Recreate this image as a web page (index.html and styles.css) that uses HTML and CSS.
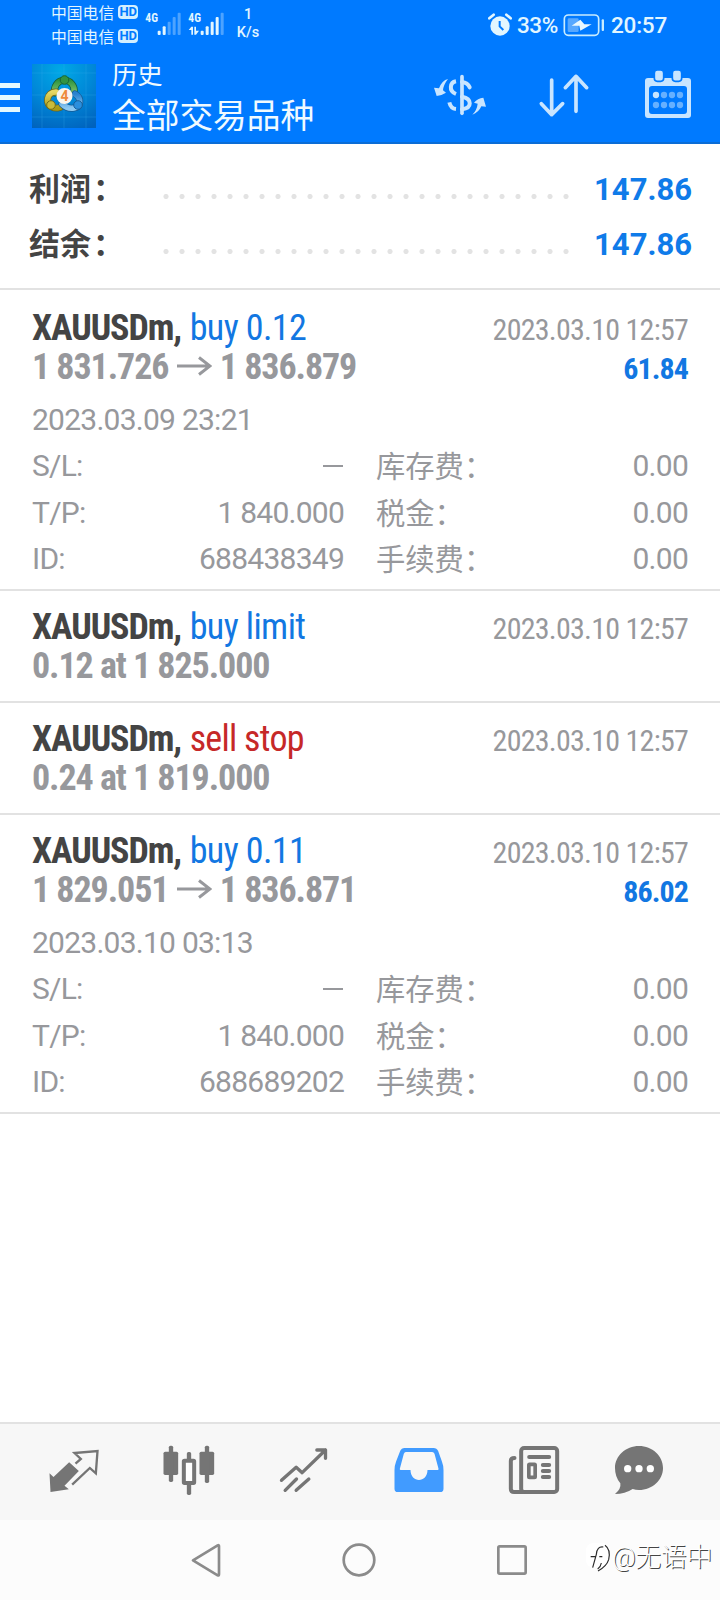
FILE: index.html
```html
<!DOCTYPE html>
<html lang="zh-CN">
<head>
<meta charset="utf-8">
<title>历史</title>
<link rel="stylesheet" href="styles.css">
</head>
<body>
<div class="screen">
  <header class="header">
    <div class="status">
      <div class="carriers">
        <div class="carrier">中国电信<span class="hd">HD</span></div>
        <div class="carrier">中国电信<span class="hd">HD</span></div>
      </div>
      <svg class="signal" width="80" height="28" viewBox="436 30 240 84">
        <g fill="#e2f6ff">
          <text class="net" x="437" y="67" textLength="38" lengthAdjust="spacingAndGlyphs">4G</text>
          <text class="net" x="566" y="67" textLength="38" lengthAdjust="spacingAndGlyphs">4G</text>
          <rect x="474" y="92" width="9" height="13" rx="3"/><rect x="489" y="79" width="9" height="26" rx="3"/>
          <rect x="603" y="92" width="9" height="13" rx="3"/><rect x="618" y="79" width="9" height="26" rx="3"/>
          <rect x="633" y="65" width="9" height="40" rx="3"/><rect x="648" y="51" width="9" height="54" rx="3"/>
          <path d="M567 90L575 80H580V104H575V90ZM584 80H589V92H598L589 104H584Z"/>
        </g>
        <g fill="#4da3ff">
          <rect x="504" y="65" width="9" height="40" rx="3"/><rect x="519" y="51" width="9" height="54" rx="3"/>
          <rect x="534" y="38" width="9" height="67" rx="3"/><rect x="663" y="38" width="9" height="67" rx="3"/>
        </g>
      </svg>
      <div class="speed"><span>1</span><span>K/s</span></div>
      <div class="status-right">
        <svg width="24" height="24" viewBox="383 37 72 72">
          <circle cx="419" cy="76" r="29" fill="#e2f6ff"/>
          <path d="M387 53L400 42M451 53L438 42" stroke="#e2f6ff" stroke-width="8" stroke-linecap="round"/>
          <path d="M418 61V77L429 88" fill="none" stroke="#007aff" stroke-width="6"/>
        </svg>
        <span class="pct">33%</span>
        <svg class="battery" width="42" height="24" viewBox="612 37 126 72">
          <rect x="616" y="43" width="103" height="61" rx="12" fill="none" stroke="#c8ecff" stroke-width="5"/>
          <rect x="626" y="53" width="33" height="41" rx="4" fill="#57a8ff"/>
          <path d="M664 57L638 75H661L664 90L698 71H676Z" fill="#e9f8ff"/>
          <rect x="728" y="56" width="7" height="35" rx="3" fill="#c8ecff"/>
        </svg>
        <span class="clock">20:57</span>
      </div>
    </div>
    <div class="toolbar">
      <div class="menu"><i></i><i></i><i></i></div>
      <svg class="logo" width="64" height="64" viewBox="0 0 64 64">
        <defs>
          <radialGradient id="bg" cx=".45" cy=".1" r="1"><stop offset="0" stop-color="#00a9e6"/><stop offset=".5" stop-color="#0088d8"/><stop offset="1" stop-color="#0062bd"/></radialGradient>
          <linearGradient id="gr" x2="0" y2="1"><stop offset="0" stop-color="#2f9440"/><stop offset="1" stop-color="#7fc36a"/></linearGradient>
          <linearGradient id="ye" x2="0" y2="1"><stop offset="0" stop-color="#e6d863"/><stop offset="1" stop-color="#a99a16"/></linearGradient>
          <linearGradient id="bl" x2="0" y2="1"><stop offset="0" stop-color="#2a82cf"/><stop offset="1" stop-color="#8cc9f2"/></linearGradient>
        </defs>
        <rect width="64" height="64" fill="url(#bg)"/>
        <path d="M10 0V64M32 0V64M54 0V64M0 9H64M0 31H64M0 53H64" stroke="#39b4ee" stroke-opacity=".25"/>
        <g fill="none" stroke-linecap="round">
          <path d="M23 29A9.800 9.800 0 1 1 42 28" stroke="#145c37" stroke-width="7"/>
          <path d="M23 29A9.800 9.800 0 1 1 42 28" stroke="url(#gr)" stroke-width="5.500"/>
          <path d="M24 28C14 28 13 41 20 43C24 45 28 44 30 42" stroke="#6c651c" stroke-width="7"/>
          <path d="M24 28C14 28 13 41 20 43C24 45 28 44 30 42" stroke="url(#ye)" stroke-width="5.500"/>
          <path d="M43 30C50 34 49 43 42 44C36 45 32 42 30 40" stroke="#155993" stroke-width="7"/>
          <path d="M43 30C50 34 49 43 42 44C36 45 32 42 30 40" stroke="url(#bl)" stroke-width="5.500"/>
        </g>
        <circle cx="32.500" cy="16" r="4.300" fill="#319343" stroke="#176636"/>
        <circle cx="19" cy="41" r="4.300" fill="#c9bb3b" stroke="#756d17"/>
        <circle cx="46" cy="41" r="4.300" fill="#2b8fdd" stroke="#16619c"/>
        <circle cx="32.500" cy="32" r="8" fill="#f8f5ee"/>
        <text class="four" x="32.500" y="37" text-anchor="middle">4</text>
      </svg>
      <div class="titles"><div class="sub">历史</div><div class="main">全部交易品种</div></div>
      <div class="actions">
        <svg width="56" height="56" viewBox="216 204 168 168">
          <g fill="none" stroke="#c9e5ff">
            <path d="M306 230V340" stroke-width="11" stroke-linecap="round"/>
            <path d="M288 244C270 247 265 273 288 282M268 307C271 320 277 326 288 327" stroke-width="12"/>
            <path d="M306 246C318 247 325 252 329 262M306 290C337 296 337 324 306 328" stroke-width="12" stroke-linecap="round"/>
          </g>
          <path d="M264 237Q246 241 237 265L222 263L230 288Q246 286 258 278L249 271Q250 255 264 237ZM337 344Q351 330 353 311L342 308Q353 295 370 293L378 320L364 319Q356 338 337 344Z" fill="#c9e5ff"/>
        </svg>
        <svg width="56" height="56" viewBox="528 204 168 168">
          <path d="M575 240V344M544 311L575 344L608 311M648 334V229M616 263L648 229L680 263" fill="none" stroke="#c9e5ff" stroke-width="11" stroke-linecap="round" stroke-linejoin="round"/>
        </svg>
        <svg width="56" height="56" viewBox="840 204 168 168">
          <path fill-rule="evenodd" fill="#c9e5ff" d="M864 234H984Q993 234 993 243V345Q993 354 984 354H864Q855 354 855 345V243Q855 234 864 234ZM876 258Q867 258 867 267V333Q867 342 876 342H972Q981 342 981 333V267Q981 258 972 258Z"/>
          <g fill="#c9e5ff" stroke="#007aff" stroke-width="5"><rect x="883" y="210" width="28" height="34" rx="9"/><rect x="937" y="210" width="28" height="34" rx="9"/></g>
          <circle cx="888" cy="285" r="9.500" fill="#c9e5ff"/>
          <g fill="#66b0ff"><circle cx="912" cy="285" r="9.500"/><circle cx="936" cy="285" r="9.500"/><circle cx="960" cy="285" r="9.500"/><circle cx="888" cy="315" r="9.500"/><circle cx="912" cy="315" r="9.500"/><circle cx="936" cy="315" r="9.500"/><circle cx="960" cy="315" r="9.500"/></g>
        </svg>
      </div>
    </div>
  </header>

  <section class="summary">
    <div class="sum-row"><span class="sum-label">利润<span class="colon">：</span></span><span class="dots"></span><span class="sum-value">147.86</span></div>
    <div class="sum-row"><span class="sum-label">结余<span class="colon">：</span></span><span class="dots"></span><span class="sum-value">147.86</span></div>
  </section>

  <main class="deals">
    <article class="deal">
      <div class="line"><div class="name"><b class="symbol">XAUUSDm,</b> <span class="buy">buy 0.12</span></div><time>2023.03.10 12:57</time></div>
      <div class="line"><div class="price">1 831.726 <svg class="arrow" width="35" height="20" viewBox="0 0 35 20"><path d="M0 10H33M22 1.500L33 10L22 18.500" fill="none" stroke="#97989c" stroke-width="3"/></svg> 1 836.879</div><b class="profit">61.84</b></div>
      <div class="details">
        <div class="opened">2023.03.09 23:21</div>
        <div class="row"><span class="key">S/L:</span><span class="val"><i class="dash"></i></span><span class="cjk">库存费：</span><span class="val">0.00</span></div>
        <div class="row"><span class="key">T/P:</span><span class="val">1 840.000</span><span class="cjk">税金：</span><span class="val">0.00</span></div>
        <div class="row"><span class="key">ID:</span><span class="val">688438349</span><span class="cjk">手续费：</span><span class="val">0.00</span></div>
      </div>
    </article>
    <article class="deal short">
      <div class="line"><div class="name"><b class="symbol">XAUUSDm,</b> <span class="buy">buy limit</span></div><time>2023.03.10 12:57</time></div>
      <div class="line"><div class="price">0.12 at 1 825.000</div></div>
    </article>
    <article class="deal short">
      <div class="line"><div class="name"><b class="symbol">XAUUSDm,</b> <span class="sell">sell stop</span></div><time>2023.03.10 12:57</time></div>
      <div class="line"><div class="price">0.24 at 1 819.000</div></div>
    </article>
    <article class="deal">
      <div class="line"><div class="name"><b class="symbol">XAUUSDm,</b> <span class="buy">buy 0.11</span></div><time>2023.03.10 12:57</time></div>
      <div class="line"><div class="price">1 829.051 <svg class="arrow" width="35" height="20" viewBox="0 0 35 20"><path d="M0 10H33M22 1.500L33 10L22 18.500" fill="none" stroke="#97989c" stroke-width="3"/></svg> 1 836.871</div><b class="profit">86.02</b></div>
      <div class="details">
        <div class="opened">2023.03.10 03:13</div>
        <div class="row"><span class="key">S/L:</span><span class="val"><i class="dash"></i></span><span class="cjk">库存费：</span><span class="val">0.00</span></div>
        <div class="row"><span class="key">T/P:</span><span class="val">1 840.000</span><span class="cjk">税金：</span><span class="val">0.00</span></div>
        <div class="row"><span class="key">ID:</span><span class="val">688689202</span><span class="cjk">手续费：</span><span class="val">0.00</span></div>
      </div>
    </article>
  </main>

  <nav class="tabs">
    <div class="tab"><svg width="56" height="56" viewBox="136.500 72 168 168">
      <path d="M206 127L235 153L192 197L205 208L150 216L147 160L159 171Z" fill="#757575"/>
      <path d="M225 131L241 117L222 99L291 93L286 160L268 144L215 194" fill="none" stroke="#757575" stroke-width="7"/>
    </svg></div>
    <div class="tab"><svg width="56" height="56" viewBox="481.500 72 168 168">
      <g fill="#757575"><rect x="489" y="95" width="44" height="70" rx="5"/><rect x="505" y="77" width="13" height="109" rx="5"/><rect x="597" y="95" width="44" height="70" rx="5"/><rect x="613" y="77" width="13" height="112" rx="5"/><rect x="559" y="96" width="13" height="28" rx="5"/><rect x="559" y="188" width="13" height="37" rx="5"/></g>
      <rect x="550" y="122" width="31" height="67" rx="2" fill="#fff" stroke="#757575" stroke-width="12"/>
    </svg></div>
    <div class="tab"><svg width="56" height="56" viewBox="826.500 72 168 168">
      <path d="M843 181L887 142L905 158L975 90M949 90H975V115M854 211L888 177M887 211L925 177" fill="none" stroke="#757575" stroke-width="10" stroke-linecap="round" stroke-linejoin="round"/>
    </svg></div>
    <div class="tab"><svg width="56" height="56" viewBox="91.500 72 168 168">
      <path d="M132 84H219Q229 84 233 93L244 124Q249 137 249 150V206Q249 216 239 216H112Q102 216 102 206V150Q102 137 107 124L119 93Q123 84 132 84Z" fill="#419bff"/>
      <path d="M136 96H215Q220 96 222 101L234 146Q235 150 231 150H201C201 190 150 190 150 150H121Q117 150 118 146L130 101Q132 96 136 96Z" fill="#f7f7f7"/>
    </svg></div>
    <div class="tab"><svg width="56" height="56" viewBox="436.500 72 168 168">
      <g fill="none" stroke="#757575" stroke-width="12" stroke-linecap="round"><rect x="482" y="84" width="108" height="132" rx="9"/><path d="M462 114Q451 114 451 123V206Q451 216 461 216H490"/><path d="M506 111H566M547 135H566M547 153H566M547 171H566"/></g>
      <rect x="505" y="133" width="19" height="39" rx="2" fill="none" stroke="#757575" stroke-width="11"/>
    </svg></div>
    <div class="tab last"><svg width="56" height="56" viewBox="753 72 168 168">
      <path d="M837 78C877 78 909 108 909 144C909 180 877 210 837 210Q827 210 818 207Q795 222 765 222Q784 207 781 190Q765 171 765 144C765 108 797 78 837 78Z" fill="#757575"/>
      <g fill="#fff"><circle cx="803" cy="146" r="11"/><circle cx="837" cy="146" r="11"/><circle cx="871" cy="146" r="11"/></g>
    </svg></div>
  </nav>

  <footer class="sysnav">
    <svg width="34" height="34" viewBox="566 368 102 102"><path d="M578 420L652 375Q656 373 656 378V462Q656 467 652 465Z" fill="none" stroke="#8b8b8b" stroke-width="8" stroke-linejoin="round"/></svg>
    <svg class="home" width="36" height="34" viewBox="0 0 36 34"><circle cx="18" cy="17" r="15.300" fill="none" stroke="#8b8b8b" stroke-width="2.700"/></svg>
    <svg width="34" height="34" viewBox="405 369 102 102"><rect x="415" y="379" width="82" height="82" rx="4" fill="none" stroke="#8b8b8b" stroke-width="8"/></svg>
    <div class="watermark">
      <svg width="27" height="30" viewBox="675 365 81 90">
        <rect x="678" y="368" width="72" height="74" rx="22" fill="#fff"/>
        <path d="M735 375Q753 388 746 418Q740 438 714 452M730 380Q711 377 709 402L698 442M692 409H706M718 409H727M724 428Q722 440 713 446" fill="none" stroke="#2b2b2b" stroke-width="3.500"/>
      </svg>
      <span>@无语中</span>
    </div>
  </footer>
</div>
</body>
</html>
```
FILE: styles.css
```css
* { box-sizing: border-box; }
body { margin: 0; background: #fff; font-family: Roboto, "Noto Sans CJK SC", sans-serif; }
svg { display: block; flex: none; }
.screen { width: 720px; height: 1600px; display: flex; flex-direction: column; overflow: hidden; background: #fff; }

.header { height: 144px; background: #007aff; border-bottom: 2px solid #0b6dd6; color: #f0faff; }
.status { height: 50px; display: flex; align-items: flex-start; padding-left: 51px; color: #e2f6ff; }
.carriers { display: flex; flex-direction: column; width: 94px; }
.carrier { display: flex; align-items: center; gap: 4px; height: 24px; font-size: 15.800px; white-space: nowrap; }
.hd { width: 20px; height: 14px; border-radius: 4px; background: #d3efff; color: #007aff; font-size: 13px; line-height: 14px; font-weight: 700; text-align: center; }
.signal { margin-top: 10px; }
.net { font-family: "Roboto Condensed", Roboto, sans-serif; font-size: 37px; font-weight: 700; }
.speed { display: flex; flex-direction: column; align-items: center; width: 30px; margin-left: 8px; padding-top: 6px; font-size: 14.500px; line-height: 18px; font-weight: 500; }
.status-right { display: flex; align-items: center; height: 50px; margin-left: auto; padding-right: 49px; font-size: 22.500px; font-weight: 500; }
.pct { width: 42px; margin-left: 5px; letter-spacing: -.02em; }
.battery { margin-left: 4px; }
.clock { width: 58px; margin-left: 6px; letter-spacing: -.01em; margin-right: 2px; }

.toolbar { height: 92px; display: flex; align-items: center; padding-right: 24px; }
.menu { width: 20px; margin-top: 2px; display: flex; flex-direction: column; gap: 7px; }
.menu i { height: 5px; background: #e4f8ff; }
.logo { margin-left: 12px; }
.four { font: 700 14px Roboto, sans-serif; fill: #ee8a3c; }
.titles { margin: 5px 0 0 16px; white-space: nowrap; }
.sub { font-size: 25.300px; line-height: 36px; }
.main { font-size: 33.700px; line-height: 46px; }
.actions { display: flex; gap: 48px; margin-left: auto; }

.summary { height: 146px; padding: 17px 28px 0 29px; border-bottom: 2px solid #e2e2e2; }
.sum-row { display: flex; align-items: center; height: 55px; }
.sum-label { width: 129px; margin-top: -5px; font: 700 31px/55px "Noto Sans CJK SC", sans-serif; color: #444; white-space: nowrap; }
.colon { margin-left: 2px; }
.dots { width: 416px; height: 5px; margin-top: 15px; background: radial-gradient(circle at 8px 2.500px, #e3e3e3 2.200px, transparent 2.900px) 0 0 / 16px 5px; }
.sum-value { margin: 1px 0 0 auto; font-size: 31px; font-weight: 700; color: #0f7be9; }

.deals { padding-top: 2px; flex: 1; }
.deal { height: 299px; padding: 16px 32px 0; border-bottom: 2px solid #e2e2e2; }
.short { height: 112px; }
.line { display: flex; justify-content: space-between; height: 39px; line-height: 41px; font-family: "Roboto Condensed", Roboto, sans-serif; font-size: 36px; letter-spacing: -.02em; white-space: nowrap; }
.symbol { color: #444; letter-spacing: -.03em; margin-right: 1px; }
.buy { color: #1277e2; letter-spacing: -.016em; }
.sell { color: #c62828; letter-spacing: -.02em; }
.line time { font-size: 30px; line-height: 43px; letter-spacing: -.025em; color: #97989c; }
.price { font-weight: 700; color: #97989c; letter-spacing: -.03em; }
.arrow { display: inline-block; margin: 0 1px 0 1px; vertical-align: 3px; }
.profit { font-size: 30px; line-height: 43px; letter-spacing: -.03em; color: #1277e2; }
.details { margin-top: 10.500px; font-size: 30px; font-weight: 400; letter-spacing: -.025em; line-height: 46.500px; color: #97989c; }
.opened { height: 46.500px; }
.row { display: grid; grid-template-columns: 80px 232px 128px 1fr; height: 46.500px; white-space: nowrap; }
.val { text-align: right; }
.cjk { padding-left: 32px; font: 400 29.300px/43px "Noto Sans CJK SC", sans-serif; letter-spacing: 0; }
.dash { display: inline-block; width: 20px; height: 2px; margin: 0 1px 9px 0; background: #97989c; }

.tabs { height: 98px; display: flex; padding-left: 16px; border-top: 2px solid #e2e2e2; background: #f7f7f7; }
.tab { width: 115px; display: flex; align-items: center; justify-content: center; }
.last { width: 96px; }
.sysnav { position: relative; height: 80px; display: flex; align-items: center; gap: 118px; padding-left: 189px; background: #fcfcfc; }
.watermark { position: absolute; left: 585px; top: 20px; display: flex; align-items: center; font-size: 25.800px; line-height: 34px; font-weight: 300; letter-spacing: -.01em; color: #fff; text-shadow: 1px 1px 0 #444; white-space: nowrap; }
```
